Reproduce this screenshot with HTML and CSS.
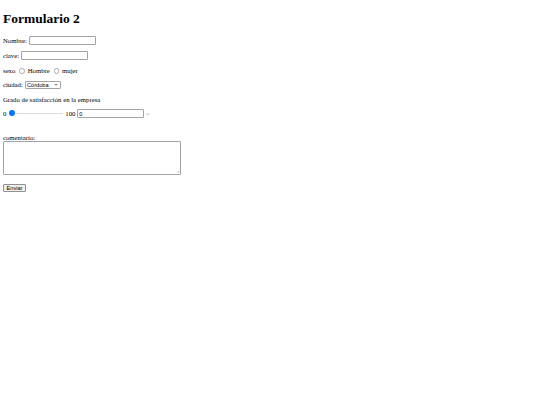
FILE: index.html
```html
<!DOCTYPE html>
<html lang="es">
<head>
  <meta charset="UTF-8" />
  <title>Formulario 2</title>
  <link rel="stylesheet" href="styles.css">
</head>
<body>
  <h1>Formulario 2</h1>
  <form action="#" method="post">
    <p>Nombre: <input class="campo" type="text" name="nombre"></p>
    <p>clave: <input class="campo" type="password" name="clave"></p>
    <p>sexo
      <input class="radio" type="radio" name="sexo" value="h"> Hombre
      <input class="radio" type="radio" name="sexo" value="m"> mujer
    </p>
    <p>ciudad:
      <span class="select-wrap">
        <select class="select" name="ciudad">
          <option>Córdoba</option>
          <option>Sevilla</option>
          <option>Málaga</option>
        </select>
        <svg class="flecha" viewBox="0 0 8 5" width="4" height="3">
          <path d="M1 1 L4 4 L7 1" fill="none" stroke="#222" stroke-width="1.4"/>
        </svg>
      </span>
    </p>
    <p>Grado de satisfacción en la empresa</p>
    <p class="fila-rango">0 <input class="rango" type="range" name="grado" min="0" max="100" value="0" oninput="valor.value = this.value"> 100
      <input class="campo" type="text" id="valor" value="0"> <span class="igual">=</span>
    </p>
    <br>
    comentario:<br>
    <span class="area-wrap">
      <textarea class="comentario" name="comentario"></textarea>
      <svg class="asa" viewBox="0 0 4 4" width="3" height="3">
        <path d="M0.5 3.8 L3.8 0.5 M2.2 3.8 L3.8 2.2" stroke="#999" stroke-width="0.6"/>
      </svg>
    </span>
    <p class="fila-boton"><input class="boton" type="submit" value="Enviar"></p>
  </form>
</body>
</html>
```

FILE: styles.css
```css
body {
  margin: 3px;
  font-family: "Liberation Serif", serif;
  font-size: 6.75px;
  color: #000;
  background: #fff;
}

h1 {
  font-size: 13.5px;
  margin: 7.5px 0 9px;
}

p {
  margin: 6.75px 0;
}

.campo {
  box-sizing: border-box;
  width: 67px;
  height: 9px;
  margin: 0;
  padding: 0 1px;
  border: 1px solid #a3a3a3;
  border-radius: 1px;
  font-family: "Liberation Sans", sans-serif;
  font-size: 5.6px;
  color: #000;
  outline: none;
}

.radio {
  appearance: none;
  box-sizing: border-box;
  width: 5.5px;
  height: 5.5px;
  margin: 0 1.3px 0 2.1px;
  border: 0.7px solid #a8a8a8;
  border-radius: 50%;
  background: #fff;
  vertical-align: -0.5px;
}

.select-wrap {
  position: relative;
  display: inline-block;
}

.select {
  appearance: none;
  box-sizing: border-box;
  width: 36px;
  height: 8px;
  margin: 0;
  padding: 0 0 0 1.5px;
  border: 1px solid #a3a3a3;
  border-radius: 1px;
  background: #fff;
  font-family: "Liberation Sans", sans-serif;
  font-size: 5.6px;
  color: #000;
}

.flecha {
  position: absolute;
  right: 3px;
  top: 2.5px;
}

.rango {
  appearance: none;
  width: 54px;
  height: 6px;
  margin: 0 0.8px;
  padding: 0;
  background: transparent;
  vertical-align: -0.5px;
}

.rango::-webkit-slider-runnable-track {
  height: 1.5px;
  border-radius: 1px;
  background: linear-gradient(to right, #0075ff 0 3px, #dcdcdc 3px);
}

.rango::-webkit-slider-thumb {
  appearance: none;
  width: 6px;
  height: 6px;
  margin-top: -2.25px;
  border: none;
  border-radius: 50%;
  background: #0075ff;
}

.igual {
  color: #b0b0b0;
}

.fila-rango {
  margin-bottom: 8.5px;
}

.area-wrap {
  position: relative;
  display: inline-block;
  vertical-align: bottom;
}

.comentario {
  display: block;
  box-sizing: border-box;
  width: 178px;
  height: 34px;
  margin: 0;
  border: 1px solid #a3a3a3;
  border-radius: 1px;
  resize: none;
  font-family: "Liberation Mono", monospace;
  font-size: 5.6px;
}

.asa {
  position: absolute;
  right: 1.5px;
  bottom: 1.5px;
}

.fila-boton {
  margin-top: 9.5px;
}

.boton {
  box-sizing: border-box;
  width: 23px;
  height: 8px;
  margin: 0;
  padding: 0;
  border: 1px solid #8f8f8f;
  border-radius: 1px;
  background: #efefef;
  font-family: "Liberation Sans", sans-serif;
  font-size: 5.6px;
  color: #000;
}
```
